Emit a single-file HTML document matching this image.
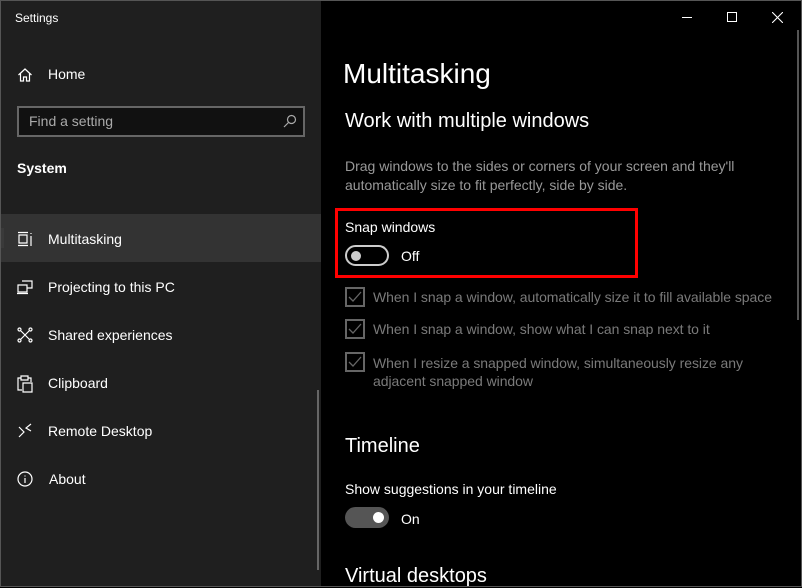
<!DOCTYPE html>
<html><head><style>
*{margin:0;padding:0;box-sizing:border-box}
body{width:802px;height:587px;overflow:hidden;background:#000;font-family:"Liberation Sans",sans-serif;color:#fff;position:relative}
.side{position:absolute;left:0;top:0;width:321px;height:587px;background:#1f1f1f}
.frame{position:absolute;left:0;top:0;width:802px;height:587px;border:1px solid #555;pointer-events:none}
.t{position:absolute;white-space:nowrap}
.nav{position:absolute;left:0;width:321px;height:48px}
.nav span{position:absolute;left:48px;top:17px;font-size:14px;color:#fff}
.nav svg{position:absolute;left:17px;top:17px}
.chk{position:absolute;left:345px;width:20px;height:20px;border:2px solid #666}
.chk svg{position:absolute;left:1px;top:1px}
.gray{color:#7a7a7a;font-size:14px;letter-spacing:-0.05px}
</style></head><body>
<div class="side"></div>
<div class="t" style="left:15px;top:11px;font-size:12px;color:#fff">Settings</div>
<div class="nav" style="top:50px"><svg width="16" height="16" viewBox="0 0 16 16" fill="none" stroke="#fff" stroke-width="1.2"><path d="M1.5 8 8 2l6.5 6M3.5 6.5V14h3v-4h3v4h3V6.5"/></svg><span style="top:16px">Home</span></div>
<div style="position:absolute;left:17px;top:106px;width:288px;height:31px;border:2px solid #666;background:#111"></div>
<div class="t" style="left:29px;top:113px;font-size:14px;color:#aaa">Find a setting</div>
<svg style="position:absolute;left:283px;top:114px" width="14" height="14" viewBox="0 0 14 14" fill="none" stroke="#aaa" stroke-width="1.2"><circle cx="8.5" cy="5.5" r="4"/><path d="M5.5 8.5 1 13"/></svg>
<div class="t" style="left:17px;top:160px;font-size:14px;font-weight:bold">System</div>
<div class="nav" style="top:214px;background:#333"><div style="position:absolute;left:0;top:14px;width:4px;height:20px;background:#3a3a3a"></div><svg width="16" height="16" viewBox="0 0 16 16" fill="none" stroke="#fff" stroke-width="1.2"><path d="M1 1.5h10M1 14.5h10M2 4h8v8H2zM14 2v1M14 5v10"/></svg><span>Multitasking</span></div>
<div class="nav" style="top:262px"><svg width="16" height="16" viewBox="0 0 16 16" fill="none" stroke="#fff" stroke-width="1.2"><path d="M5 2h10v7h-5M1 6h9v7H1zM0 14.5h11"/></svg><span>Projecting to this PC</span></div>
<div class="nav" style="top:310px"><svg width="16" height="16" viewBox="0 0 16 16" fill="none" stroke="#fff" stroke-width="1.2"><circle cx="2.5" cy="2.5" r="1.5"/><circle cx="13.5" cy="2.5" r="1.5"/><circle cx="2.5" cy="13.5" r="1.5"/><circle cx="13.5" cy="13.5" r="1.5"/><path d="M4 4l8 8M12 4l-8 8"/></svg><span>Shared experiences</span></div>
<div class="nav" style="top:358px"><svg width="16" height="18" viewBox="0 0 16 18" fill="none" stroke="#fff" stroke-width="1.2"><path d="M4 3H1v12h4M11 3h3v4M4 1h7v4H4zM6 8h9v9H6z"/></svg><span>Clipboard</span></div>
<div class="nav" style="top:406px"><svg width="16" height="16" viewBox="0 0 16 16" fill="none" stroke="#fff" stroke-width="1.2"><path d="M2 4l5 5-5 5M14 1 9 5l5 3"/></svg><span>Remote Desktop</span></div>
<div class="nav" style="top:454px"><svg width="16" height="16" viewBox="0 0 16 16" fill="none" stroke="#fff" stroke-width="1.2"><circle cx="8" cy="8" r="7"/><path d="M8 7v5M8 4.5v1"/></svg><span style="left:49px">About</span></div>
<div style="position:absolute;left:317px;top:390px;width:2px;height:180px;background:#666"></div>
<div style="position:absolute;left:682px;top:17px;width:10px;height:1px;background:#fff"></div>
<div style="position:absolute;left:727px;top:12px;width:10px;height:10px;border:1px solid #fff"></div>
<svg style="position:absolute;left:772px;top:12px" width="11" height="11" viewBox="0 0 11 11" stroke="#fff" stroke-width="1.1"><path d="M0 0l11 11M11 0 0 11"/></svg>
<div class="t" style="left:343px;top:58px;font-size:28px">Multitasking</div>
<div class="t" style="left:345px;top:110px;font-size:20px">Work with multiple windows</div>
<div class="t" style="left:345px;top:157px;font-size:14px;color:#999;line-height:19px">Drag windows to the sides or corners of your screen and they'll<br>automatically size to fit perfectly, side by side.</div>
<div style="position:absolute;left:335px;top:208px;width:303px;height:70px;border:3px solid #f00"></div>
<div class="t" style="left:345px;top:219px;font-size:14px">Snap windows</div>
<div style="position:absolute;left:345px;top:245px;width:44px;height:21px;border:2px solid #ccc;border-radius:11px"></div>
<div style="position:absolute;left:351px;top:251px;width:10px;height:10px;border-radius:5px;background:#ccc"></div>
<div class="t" style="left:401px;top:248px;font-size:14px">Off</div>
<div class="chk" style="top:287px"><svg width="14" height="14" viewBox="0 0 14 14" fill="none" stroke="#666" stroke-width="1.3"><path d="M1 7l4 4 8-9"/></svg></div>
<div class="t gray" style="left:373px;top:289px">When I snap a window, automatically size it to fill available space</div>
<div class="chk" style="top:319px"><svg width="14" height="14" viewBox="0 0 14 14" fill="none" stroke="#666" stroke-width="1.3"><path d="M1 7l4 4 8-9"/></svg></div>
<div class="t gray" style="left:373px;top:321px">When I snap a window, show what I can snap next to it</div>
<div class="chk" style="top:352px"><svg width="14" height="14" viewBox="0 0 14 14" fill="none" stroke="#666" stroke-width="1.3"><path d="M1 7l4 4 8-9"/></svg></div>
<div class="t gray" style="left:373px;top:354px;line-height:18px">When I resize a snapped window, simultaneously resize any<br>adjacent snapped window</div>
<div class="t" style="left:345px;top:435px;font-size:20px">Timeline</div>
<div class="t" style="left:345px;top:481px;font-size:14px">Show suggestions in your timeline</div>
<div style="position:absolute;left:345px;top:507px;width:44px;height:21px;background:#555;border-radius:11px"></div>
<div style="position:absolute;left:373px;top:512px;width:11px;height:11px;border-radius:6px;background:#fff"></div>
<div class="t" style="left:401px;top:511px;font-size:14px">On</div>
<div class="t" style="left:345px;top:565px;font-size:20px">Virtual desktops</div>
<div style="position:absolute;left:797px;top:30px;width:2px;height:290px;background:#555"></div>
<div class="frame"></div>
</body></html>
